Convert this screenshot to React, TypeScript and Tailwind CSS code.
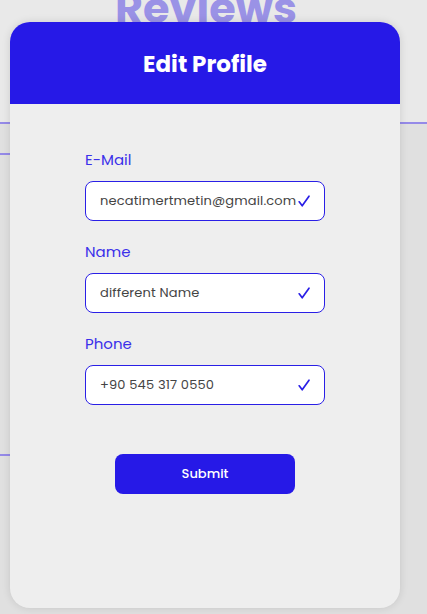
import React from "react";

const Check = () => (
  <svg width="14" height="14" viewBox="0 0 14 14" fill="none">
    <path d="M2.2 7.8 L5.2 11.8 L12 2.2" stroke="#2a1fe6" strokeWidth="1.7" strokeLinecap="round" strokeLinejoin="round" />
  </svg>
);

function Field({ label, value }: { label: string; value: string }) {
  return (
    <div className="flex flex-col">
      <label className="text-[15px] leading-[20px] text-[#3b30ea] mb-[11px]">{label}</label>
      <div className="w-[240px] h-[40px] rounded-[8px] border border-[#2a1fe6] bg-white flex items-center pl-[14px] pr-[13px]">
        <span className="flex-1 text-[13px] text-[#444] truncate tracking-[0.15px]">{value}</span>
        <Check />
      </div>
    </div>
  );
}

export default function App() {
  return (
    <div
      className="relative w-[427px] h-[614px] overflow-hidden bg-[#e0e0e0]"
      style={{ fontFamily: "Poppins, 'Open Sans', 'Noto Sans', sans-serif" }}
    >
      {/* background page */}
      <div className="absolute inset-x-0 top-0 h-[122px] bg-[#e9e9e9]" />
      <div className="absolute left-[0px] w-[412px] top-[-20px] text-center text-[43px] leading-[56px] font-bold text-[#9a92e6]">
        Reviews
      </div>
      <div className="absolute left-0 right-0 top-[122px] h-[2px] bg-[#958ae8]" />
      <div className="absolute left-0 w-[40px] top-[153px] h-[2px] bg-[#958ae8]" />
      <div className="absolute left-0 w-[40px] top-[454px] h-[2px] bg-[#958ae8]" />

      {/* modal */}
      <div className="absolute left-[10px] top-[22px] w-[390px] h-[586px] rounded-[20px] bg-[#eeeeee] shadow-[0_0_8px_rgba(0,0,0,0.12)] overflow-hidden flex flex-col">
        <div className="h-[82px] bg-[#2619e7] flex items-center justify-center">
          <h1 className="text-white text-[23px] font-bold translate-y-[1px]">Edit Profile</h1>
        </div>
        <div className="flex flex-col pl-[75px] pt-[46px] gap-[21px]">
          <Field label="E-Mail" value="necatimertmetin@gmail.com" />
          <Field label="Name" value="different Name" />
          <Field label="Phone" value="+90 545 317 0550" />
        </div>
        <div className="flex justify-center mt-[49px]">
          <button className="w-[180px] h-[40px] rounded-[8px] bg-[#2619e7] text-white text-[13px] font-medium">
            Submit
          </button>
        </div>
      </div>
    </div>
  );
}
